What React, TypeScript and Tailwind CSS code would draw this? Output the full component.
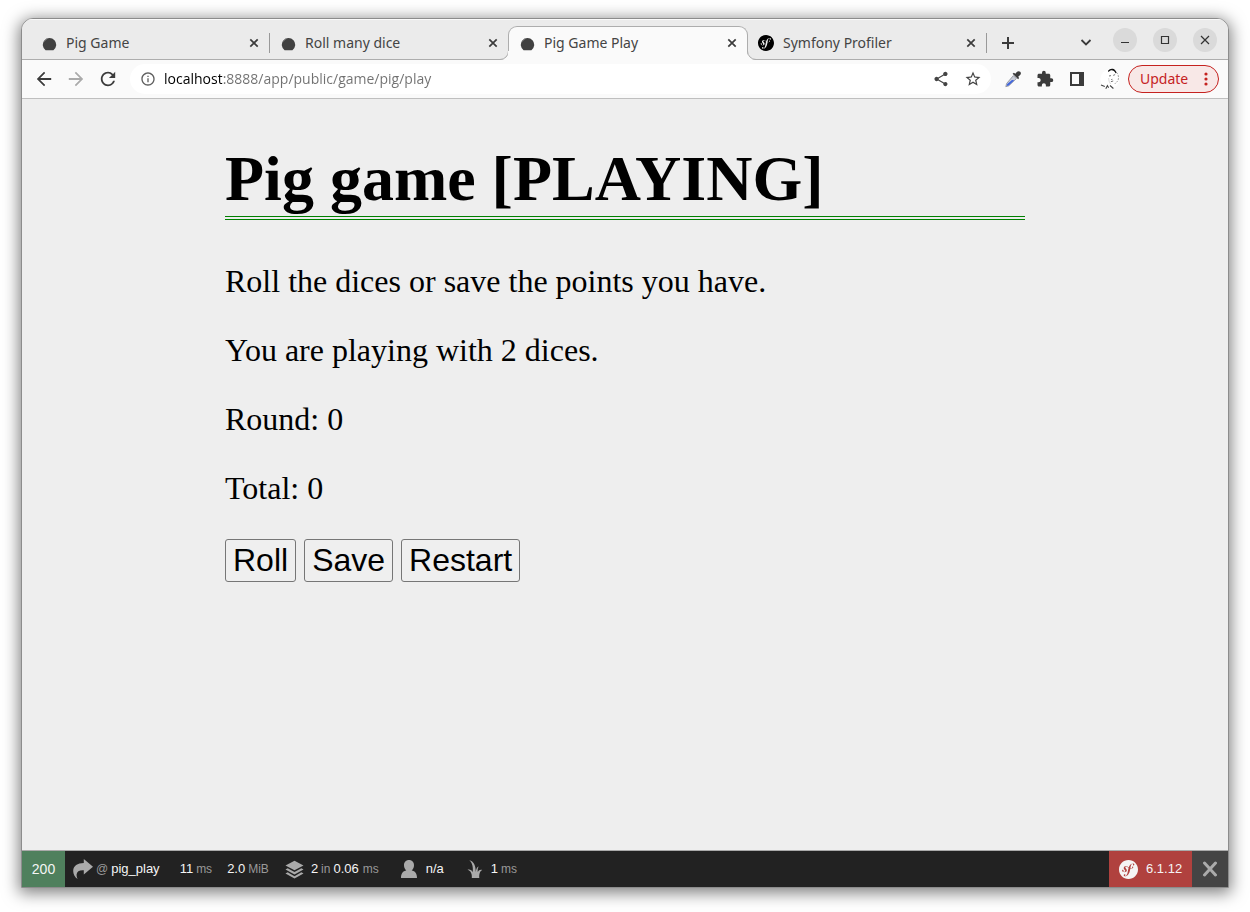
import React from "react";
import {
  MdArrowBack,
  MdArrowForward,
  MdRefresh,
  MdInfoOutline,
  MdShare,
  MdStarOutline,
  MdExtension,
} from "react-icons/md";
import { SiSymfony } from "react-icons/si";

function DiceIcon() {
  return (
    <svg viewBox="0 0 16 16" className="h-4 w-4 shrink-0" aria-hidden="true">
      <path d="M4.6 15.2A6.7 6.7 0 1 1 12.4 15.2Z" fill="#414141" />
      <path d="M3.2 6.6A6 6 0 0 1 7 3.3" stroke="#8a8a8a" strokeWidth="0.9" fill="none" />
    </svg>
  );
}

function CloseGlyph() {
  return (
    <svg viewBox="0 0 16 16" className="h-4 w-4" aria-hidden="true">
      <path d="M4.3 4.3l7.4 7.4M11.7 4.3l-7.4 7.4" stroke="#3c3c3c" strokeWidth="1.7" fill="none" />
    </svg>
  );
}

function Tab({
  title,
  icon,
  active = false,
  divider = false,
}: {
  title: string;
  icon: React.ReactNode;
  active?: boolean;
  divider?: boolean;
}) {
  return (
    <div
      className={
        active
          ? "relative -mb-px -ml-px flex h-[34px] w-[240px] min-w-0 items-center rounded-t-[9px] border border-b-0 border-[#adadad] bg-[#fafafa] pr-[7px] pb-[2px] pl-[10px]"
          : "relative flex h-[33px] w-[239px] min-w-0 items-center pr-2 pl-[10px]"
      }
    >
      {active && (
        <>
          <svg viewBox="0 0 9 9" className="absolute bottom-0 -left-[9px] h-[9px] w-[9px]" aria-hidden="true">
            <path d="M0 9A9 9 0 0 0 9 0V9Z" fill="#fafafa" />
            <path d="M0 8.5A8.5 8.5 0 0 0 8.5 0" fill="none" stroke="#adadad" />
          </svg>
          <span className="absolute bottom-0 -left-px h-[9px] w-px bg-[#fafafa]" />
          <svg viewBox="0 0 9 9" className="absolute -right-[9px] bottom-0 h-[9px] w-[9px]" aria-hidden="true">
            <path d="M9 9A9 9 0 0 1 0 0V9Z" fill="#fafafa" />
            <path d="M9 8.5A8.5 8.5 0 0 1 0.5 0" fill="none" stroke="#adadad" />
          </svg>
        </>
      )}
      {icon}
      <a href="#" className="ml-[9px] min-w-0 flex-1 truncate text-[14px] leading-5 text-[#444]">
        {title}
      </a>
      <button type="button" aria-label={`Close ${title}`}>
        <CloseGlyph />
      </button>
      {divider && <span className="absolute top-[7px] right-0 h-5 w-px bg-[#999]" />}
    </div>
  );
}

function WindowButton({ label, children }: { label: string; children: React.ReactNode }) {
  return (
    <button type="button" aria-label={label} className="flex h-6 w-6 items-center justify-center rounded-full bg-[#dadada]">
      <svg viewBox="0 0 12 12" className="h-3 w-3" fill="none" stroke="#333" strokeWidth="1.2" aria-hidden="true">
        {children}
      </svg>
    </button>
  );
}

function EyedropperIcon() {
  return (
    <svg viewBox="0 0 18 18" className="h-[18px] w-[18px]" aria-hidden="true">
      <path d="M9.4 5.6l3 3-7.6 7.2-3 .9.8-3.2z" fill="#c9cdd8" stroke="#8a8d98" strokeWidth="0.8" />
      <path d="M8 10.1l2.3.2-5.6 5.1-2.1.5.6-1.9z" fill="#3f64dc" />
      <path d="M8.6 3.7l5.5 5.5 1-1.2-.9-1.3 1.9-1.6c1.1-1 1-2.6.1-3.3-.9-.8-2.5-.8-3.4.2l-1.5 1.7-1.4-.9z" fill="#3b3b3b" />
    </svg>
  );
}

function AvatarIcon() {
  return (
    <svg viewBox="0 0 20 22" className="h-[22px] w-5" fill="none" aria-hidden="true">
      <circle cx="10" cy="11" r="9.6" fill="#fff" />
      <path d="M8 2.800C10 .2 13.200.1 15.200 2.200L16.800 4.800L15.600 5.200C14.600 3 12.500 1.800 10.500 2.400L8.300 3.900Z" fill="#111" />
      <path d="M16.600 4.500c2 2 2.400 5.500 1.300 8.300l-3.200 3.200" stroke="#999" strokeWidth="0.900" strokeDasharray="2 1" />
      <path d="M9 8l2-.4M13.200 7.400l1.900-.8M11.200 11.600l1.200-.3M10.900 13.700l2.300-.7" stroke="#666" strokeWidth="0.900" />
      <path d="M8.700 10c0 2.400.6 4.500 2 6" stroke="#ccc" strokeWidth="0.700" />
      <path d="M1 17l3.800 1.400M5.800 20.800l1.600-3.200 1.200 2.200M10 17.500l3.400 3" stroke="#444" strokeWidth="1.100" />
    </svg>
  );
}

function Toolbar() {
  return (
    <div className="flex h-[39px] items-center border-b border-[#bfbfbf] bg-[#fafafa] pr-[9px] pl-[13px]">
      <div className="flex gap-[14px] text-[18px] text-[#3b3b3b]">
        <button type="button" aria-label="Back"><MdArrowBack className="h-[18px] w-[18px]" viewBox="2 2 20 20" /></button>
        <button type="button" aria-label="Forward" className="text-[#aaa]"><MdArrowForward className="h-[18px] w-[18px]" viewBox="2 2 20 20" /></button>
        <button type="button" aria-label="Reload"><MdRefresh className="h-[18px] w-[18px]" viewBox="2 2 20 20" /></button>
      </div>
      <div className="ml-[13px] flex h-[30px] min-w-0 flex-1 items-center rounded-full bg-white pr-[9px] pl-[10px]">
        <MdInfoOutline className="h-4 w-4 shrink-0 text-[#5f5f5f]" />
        <input
          type="text"
          aria-label="Address"
          defaultValue="localhost:8888/app/public/game/pig/play"
          className="ml-2 min-w-0 flex-1 bg-[linear-gradient(to_right,#000_58px,#707070_58px)] bg-clip-text font-['Open_Sans',sans-serif] text-[14px] leading-5 text-transparent outline-none"
        />
        <div className="flex gap-[15px] text-[#444]">
          <button type="button" aria-label="Share"><MdShare className="h-4 w-4" viewBox="1 1 22 22" /></button>
          <button type="button" aria-label="Bookmark"><MdStarOutline className="h-[18px] w-[18px]" viewBox="0 0 24 24" /></button>
        </div>
      </div>
      <div className="ml-[13px] flex items-center gap-[14px] text-[#3b3b3b]">
        <button type="button" aria-label="Color picker"><EyedropperIcon /></button>
        <button type="button" aria-label="Extensions"><MdExtension className="h-[18px] w-[18px]" viewBox="0 0 24 24" /></button>
        <button type="button" aria-label="Side panel">
          <svg viewBox="0 0 18 18" className="h-[18px] w-[18px]" aria-hidden="true">
            <path fillRule="evenodd" d="M2 2H16V16H2ZM4 4V14H11V4Z" fill="#3b3b3b" />
          </svg>
        </button>
        <button type="button" aria-label="Profile"><AvatarIcon /></button>
      </div>
      <button
        type="button"
        className="ml-2 flex h-7 w-[91px] items-center justify-between rounded-full border border-[#c5221f] bg-[#f8e8e7] pr-[10px] pb-px pl-[11px] text-[14px] text-[#c5221f]"
      >
        Update
        <svg viewBox="0 0 4 14" className="mt-px h-[14px] w-1" fill="currentColor" aria-hidden="true">
          <circle cx="2" cy="2" r="1.600" />
          <circle cx="2" cy="7" r="1.600" />
          <circle cx="2" cy="12" r="1.600" />
        </svg>
      </button>
    </div>
  );
}

const actionClass =
  "rounded-[3px] border border-[#767676] bg-[#efefef] px-[7px] py-[2px] font-['Liberation_Sans',sans-serif] text-[32px] leading-[37px]";

function DebugBar() {
  return (
    <footer className="flex h-[37px] items-stretch border-t border-[#aaa] bg-[#222] font-['Liberation_Sans',sans-serif] text-[13px] text-[#f5f5f5]">
      <a href="#" className="flex w-[43px] items-center justify-center bg-[#4f805d] text-[14px]">200</a>
      <a href="#" className="ml-2 flex items-center">
        <svg viewBox="0 0 20 20" className="h-5 w-5" fill="#aaa" aria-hidden="true">
          <path d="M10.800 0L20 7.800L10.800 15.600V11.300C6.500 11 3.800 12.500 3.600 15.500C3.500 17.200 4 18.800 4.600 20C1.800 18 .2 15 .2 11.900C.3 6.800 4.500 4 10.800 4Z" />
        </svg>
        <span className="ml-[3px] text-[12px] text-[#999]">@</span>
        <span className="ml-[3px]">pig_play</span>
      </a>
      <a href="#" className="ml-5 flex items-center gap-[3px]">11<span className="text-[12px] text-[#999]">ms</span></a>
      <a href="#" className="ml-[15px] flex items-center gap-[3px]">2.0<span className="text-[12px] text-[#999]">MiB</span></a>
      <a href="#" className="ml-4 flex items-center gap-[3px]">
        <svg viewBox="0 0 20 20" className="mr-1 h-[19px] w-[19px]" aria-hidden="true">
          <path d="M10 .8L19.500 5.800L10 10.800L.5 5.800Z" fill="#aaa" />
          <path d="M.5 10L2.800 8.700L10 12.600L17.200 8.700L19.500 10L10 15.200Z" fill="#aaa" />
          <path d="M.5 14.300L2.800 13L10 17L17.200 13L19.500 14.300L10 19.500Z" fill="#aaa" />
        </svg>
        2<span className="text-[12px] text-[#999]">in</span>0.06<span className="ml-px text-[12px] text-[#999]">ms</span>
      </a>
      <a href="#" className="ml-[22px] flex items-center">
        <svg viewBox="0 0 16 18" className="mr-[9px] h-[18px] w-4" fill="#aaa" aria-hidden="true">
          <path d="M8 0C11 0 13 2.200 13 5.200C13 7.500 12 9.300 10.700 10.400C14 11 16 13 16 18H0C0 13 2 11 5.300 10.400C4 9.300 3 7.500 3 5.200C3 2.200 5 0 8 0Z" />
        </svg>
        n/a
      </a>
      <a href="#" className="ml-[23px] flex items-center gap-[3px]">
        <svg viewBox="0 0 16 18" className="mr-[5px] h-[18px] w-4" fill="#aaa" aria-hidden="true">
          <path d="M4.800 18C5.200 14.500 4 10.700 .5 9.800C2.800 9.100 4.800 10 5.700 12.200C6.300 7.800 5.500 2.900 2.300.3C6.700 1.200 8.800 5.500 8.700 12C9 9 10.200 6.800 11.700 6.500C10.700 8 10.500 10 10.800 12C11.700 10 13.300 9.300 15.300 9.900C12.700 11 12 14.500 12.300 18Z" />
        </svg>
        1<span className="text-[12px] text-[#999]">ms</span>
      </a>
      <a href="#" className="ml-auto flex w-[83px] items-center gap-2 bg-[#b0413e] pl-[10px]">
        <SiSymfony className="h-[19px] w-[19px]" aria-hidden="true" />
        6.1.12
      </a>
      <button type="button" aria-label="Close toolbar" className="flex w-9 items-center justify-center bg-[#444]">
        <svg viewBox="0 0 16 16" className="h-4 w-4" aria-hidden="true">
          <path d="M2.500 2L13.500 14M13.500 2L2.500 14" stroke="#aaa" strokeWidth="3" strokeLinecap="round" />
        </svg>
      </button>
    </footer>
  );
}

export default function App() {
  return (
    <div className="flex min-h-screen flex-col bg-white px-[21px] pt-[18px] pb-6">
      <div className="flex flex-1 flex-col overflow-hidden rounded-t-xl border border-[#8c8c8c] bg-[#eee] shadow-[0_3px_16px_2px_rgba(0,0,0,0.5)]">
        <div className="font-['Noto_Sans',sans-serif]">
          <header className="flex h-[41px] items-end border-b border-[#adadad] bg-[#ebebeb] pr-[11px] pl-[9px] shadow-[inset_0_1px_0_#fafafa]">
            <nav className="flex min-w-0 items-end" aria-label="Tabs">
              <Tab title="Pig Game" icon={<DiceIcon />} divider />
              <Tab title="Roll many dice" icon={<DiceIcon />} />
              <Tab title="Pig Game Play" icon={<DiceIcon />} active />
              <Tab title="Symfony Profiler" icon={<SiSymfony className="h-4 w-4 shrink-0 text-black" />} divider />
            </nav>
            <button type="button" aria-label="New tab" className="mb-2 ml-[13px]">
              <svg viewBox="0 0 16 16" className="h-4 w-4" aria-hidden="true">
                <path d="M8 2V14M2 8H14" stroke="#3b3b3b" strokeWidth="2" />
              </svg>
            </button>
            <div className="ml-auto flex items-center gap-4 pb-[7px]">
              <button type="button" aria-label="Search tabs" className="pt-1">
                <svg viewBox="0 0 14 14" className="h-[14px] w-[14px]" aria-hidden="true">
                  <path d="M2.500 5L7 9.500L11.500 5" stroke="#3b3b3b" strokeWidth="1.800" fill="none" />
                </svg>
              </button>
              <div className="ml-1 flex gap-4">
                <WindowButton label="Minimize"><path d="M2 8.500H10" /></WindowButton>
                <WindowButton label="Maximize"><path d="M2.500 2.500H9.500V9.500H2.500Z" /></WindowButton>
                <WindowButton label="Close"><path d="M2 2L10 10M10 2L2 10" /></WindowButton>
              </div>
            </div>
          </header>
          <Toolbar />
        </div>
        <main className="mx-auto w-full max-w-[800px] flex-1 pt-[43px] font-['Liberation_Serif',serif] text-[32px] leading-[37px] text-black">
          <h1 className="border-b-4 border-double border-[green] text-[64px] leading-[74px] font-bold">Pig game [PLAYING]</h1>
          <div className="mt-[43px] flex flex-col gap-8">
            <p>Roll the dices or save the points you have.</p>
            <p>You are playing with 2 dices.</p>
            <p>Round: 0</p>
            <p>Total: 0</p>
            <form className="flex gap-2" onSubmit={(event) => event.preventDefault()}>
              <button type="submit" className={actionClass}>Roll</button>
              <button type="submit" className={actionClass}>Save</button>
              <button type="submit" className={actionClass}>Restart</button>
            </form>
          </div>
        </main>
        <DebugBar />
      </div>
    </div>
  );
}
